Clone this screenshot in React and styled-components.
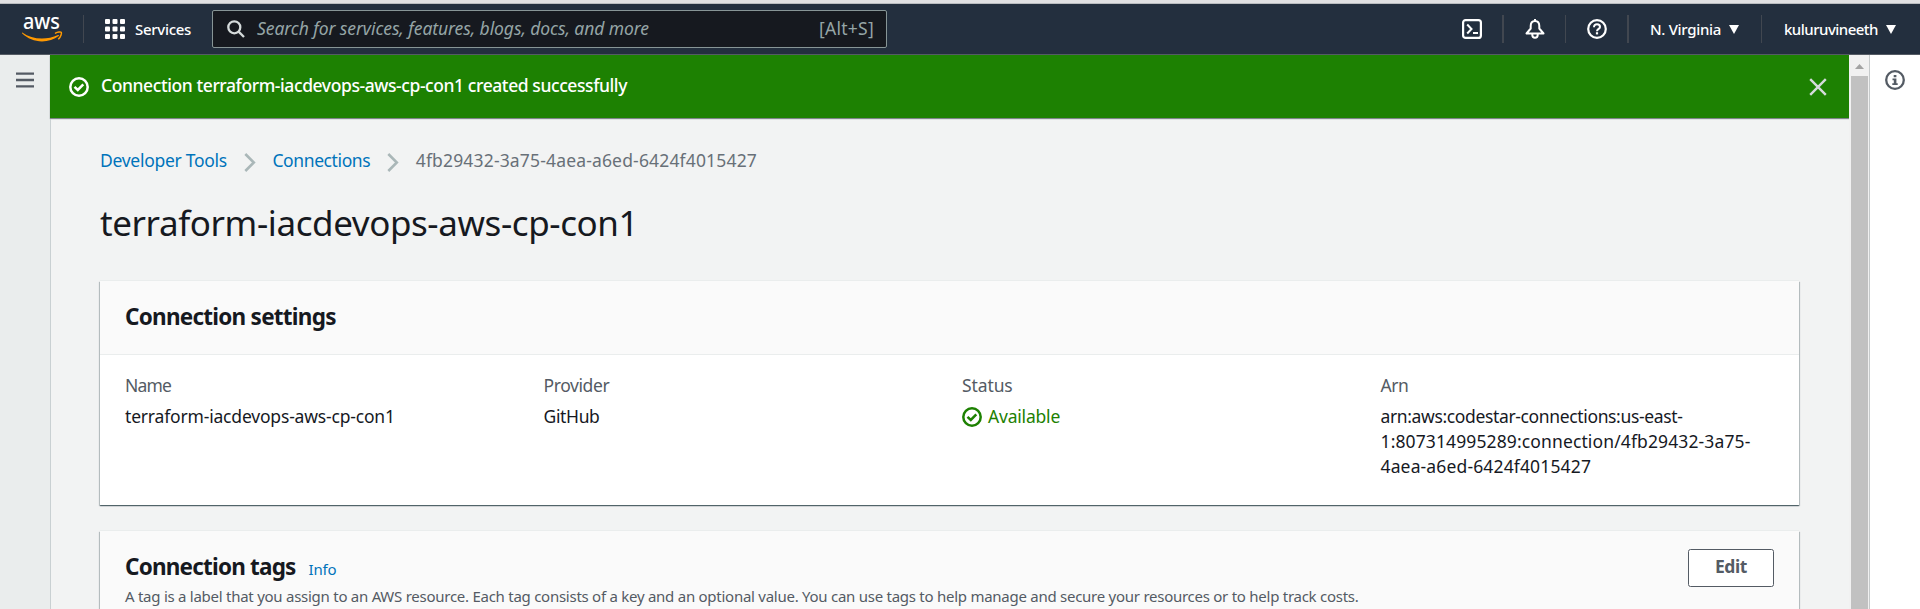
import React from "react";
import styled, { createGlobalStyle } from "styled-components";

const GlobalStyle = createGlobalStyle`
  * { box-sizing: border-box; }
  html, body { margin: 0; height: 100%; overflow: hidden; }
  body {
    font-family: "Noto Sans", "Open Sans", sans-serif;
    font-size: 17.5px;
    line-height: 25px;
    color: #16191f;
    background: #f2f3f3;
  }
  svg { display: block; flex: none; }
`;

const Page = styled.div`
  height: 609px;
  display: flex;
  flex-direction: column;
  overflow: hidden;
`;

const BrowserEdge = styled.div`
  height: 4px;
  flex: none;
  background: #e0e0e2;
  border-bottom: 1px solid #b9bcbf;
`;

const Header = styled.header`
  height: 51px;
  flex: none;
  display: flex;
  align-items: center;
  background: #232f3e;
  border-bottom: 1px solid #545b64;
  color: #fff;
`;

const Track = styled.span`
  letter-spacing: ${(p) => p.$ls || 0}px;
  white-space: nowrap;
`;

const LogoCell = styled.a`
  width: 83px;
  padding-left: 22px;
`;

const Divider = styled.span`
  width: ${(p) => p.$w || 1}px;
  height: 28px;
  background: #414750;
`;

const Services = styled.button`
  display: flex;
  align-items: center;
  gap: 10px;
  width: 128px;
  padding: 0 0 0 21px;
  border: 0;
  background: none;
  color: inherit;
  font: 500 15px/20px "Noto Sans", sans-serif;
`;

const SearchBox = styled.div`
  width: 675px;
  height: 38px;
  padding: 0 12px 0 14px;
  display: flex;
  align-items: center;
  background: #16191f;
  border: 1px solid #879596;
  border-radius: 2px;
  color: #95a5a6;
`;

const Placeholder = styled(Track)`
  flex: 1;
  margin-left: 12px;
  padding-bottom: 2px;
  font-style: italic;
`;

const Shortcut = styled(Track)`
  padding-bottom: 2px;
`;

const HeaderTools = styled.nav`
  margin-left: auto;
  display: flex;
  align-items: center;
`;

const IconButton = styled.button`
  width: ${(p) => p.$w}px;
  padding: 0;
  display: flex;
  justify-content: center;
  border: 0;
  background: none;
  color: inherit;
`;

const MenuButton = styled.button`
  width: ${(p) => p.$w}px;
  padding: 0 0 0 ${(p) => p.$pad}px;
  display: flex;
  align-items: center;
  gap: 8px;
  border: 0;
  background: none;
  color: inherit;
  font: 500 15px/20px "Noto Sans", sans-serif;
`;

const Body = styled.div`
  flex: 1;
  min-height: 0;
  display: flex;
`;

const SideRail = styled.aside`
  width: 50px;
  flex: none;
  padding: 16px 0 0 16px;
  background: #eaeded;
`;

const HelpRail = styled.aside`
  width: 51px;
  flex: none;
  padding: 15px 0 0 15px;
  background: #fff;
  border-left: 1px solid #c6cacb;
  color: #545b64;
`;

const Scrollbar = styled.div`
  width: 20px;
  flex: none;
  padding: 9px 1px 0 2px;
  display: flex;
  flex-direction: column;
  align-items: center;
  gap: 7px;
  background: #f1f1f1;
`;

const Thumb = styled.div`
  width: 100%;
  flex: 1;
  background: #c1c1c1;
`;

const Main = styled.main`
  flex: 1;
  min-width: 0;
  display: flex;
  flex-direction: column;
`;

const Flash = styled.div`
  height: 63px;
  flex: none;
  padding: 0 22px 0 19px;
  display: flex;
  align-items: center;
  gap: 12px;
  background: #1d8102;
  color: #fff;
  box-shadow: 0 1px 1px #7d8588;
`;

const FlashText = styled(Track)`
  flex: 1;
  padding-bottom: 3px;
  font-weight: 500;
`;

const Content = styled.div`
  flex: 1;
  min-height: 0;
  margin-top: 1px;
  padding: 29px 50px 0 49px;
  border-left: 1px solid #c9d0d2;
`;

const Breadcrumbs = styled.nav`
  height: 25px;
  display: flex;
  align-items: center;
`;

const Crumb = styled(Track)`
  color: ${(p) => (p.$current ? "#687078" : "#0073bb")};
`;

const Chevron = styled.svg`
  margin: 3px 16.5px 0 17px;
`;

const Title = styled.h1`
  margin: 28px 0 36px 0;
  font-size: 35px;
  line-height: 44px;
  font-weight: 400;
`;

const Card = styled.section`
  margin-bottom: 26px;
  background: #fff;
  box-shadow: 0 1px 1px 0 rgba(0, 28, 36, 0.5), 1px 1px 1px 0 rgba(0, 28, 36, 0.18),
    -1px 1px 1px 0 rgba(0, 28, 36, 0.18), 0 -1px 0 0 #eaeded;
`;

const CardHeader = styled.div`
  min-height: ${(p) => p.$h || 74}px;
  padding: 18px 25px 0;
  display: flex;
  justify-content: space-between;
  align-items: flex-start;
  background: #fafafa;
  border-bottom: 1px solid #eaeded;
`;

const CardTitle = styled.h2`
  margin: 0;
  padding-top: 4px;
  font-size: 22.5px;
  line-height: 28px;
  font-weight: 700;
`;

const TitleRow = styled.div`
  display: flex;
  align-items: baseline;
  gap: 13px;
`;

const InfoLink = styled(Track)`
  font-size: 15px;
  color: #0073bb;
`;

const Description = styled.p`
  margin: 4px 0 0;
  font-size: 15px;
  line-height: 20px;
  color: #545b64;
`;

const EditButton = styled.button`
  width: 86px;
  height: 38px;
  padding: 0 0 4px;
  background: #fff;
  border: 1px solid #545b64;
  border-radius: 2.5px;
  color: #545b64;
  font: 700 17.5px/25px "Noto Sans", sans-serif;
`;

const Fields = styled.dl`
  margin: 0;
  padding: 18px 0 26px 25px;
  display: grid;
  grid-template-columns: repeat(4, 418.5px);
`;

const Label = styled.dt`
  margin-bottom: 6px;
  color: #545b64;
`;

const Value = styled.dd`
  margin: 0;
  display: flex;
  flex-direction: column;
`;

const Status = styled.span`
  display: flex;
  align-items: center;
  gap: 6px;
  color: #1d8102;
`;

const AwsLogo = () => (
  <svg width="42" height="44" viewBox="0 -8 42 44">
    <text x="1" y="14" fontSize="21.500" fontWeight="500" fill="#fff" textLength="37" lengthAdjust="spacingAndGlyphs">aws</text>
    <path d="M0.3 17.6C6 21.600 12.500 23.600 20 23.600c5.200 0 11-1.300 16-3.600.8-.4 1.500.5.7 1.100C32.300 24.700 26 26.400 20 26.400 12.500 26.400 5.500 23.500.2 18.500c-.5-.5-.4-1 .1-.9z" fill="#f90" />
    <path d="M33.500 18.100c2-1.200 5.500-1.300 5.800-.8.500.8-.5 4.700-2.700 6.500" fill="none" stroke="#f90" strokeWidth="1.500" strokeLinecap="round" />
  </svg>
);

const GridIcon = () => (
  <svg width="20" height="20" viewBox="0 0 20 20" fill="#fff">
    {[0, 7.500, 15].map((y) => [0, 7.500, 15].map((x) => <rect key={`${x}-${y}`} x={x} y={y} width="5" height="5" rx="1" />))}
  </svg>
);

const SearchIcon = () => (
  <svg width="18" height="18" viewBox="0 0 18 18" fill="none" stroke="#d5dbdb" strokeWidth="2.300">
    <circle cx="7.300" cy="7.300" r="6" />
    <path d="M11.600 11.600l5.400 5.400" />
  </svg>
);

const TerminalIcon = () => (
  <svg width="20" height="20" viewBox="0 0 20 20" fill="none" stroke="currentColor" strokeWidth="2.200">
    <rect x="1.100" y="1.100" width="17.800" height="17.800" rx="2.500" />
    <path d="M5.200 5.500l4.300 4.500-4.300 4.500M11 14h5" strokeWidth="2" />
  </svg>
);

const BellIcon = () => (
  <svg width="20" height="20" viewBox="0 0 20 20" fill="none" stroke="currentColor" strokeWidth="2" strokeLinejoin="round">
    <path d="M10 2C6.800 2 5.700 4.500 5.700 7v2.500L1.500 14.500h17L14.300 9.500V7C14.300 4.500 13.200 2 10 2zM10 0v2" />
    <path d="M7.300 15v1a2.700 2.700 0 0 0 5.400 0v-1" />
  </svg>
);

const HelpIcon = () => (
  <svg width="20" height="20" viewBox="0 0 20 20" fill="none" stroke="currentColor" strokeWidth="2.200">
    <circle cx="10" cy="10" r="8.800" />
    <path d="M7 8.200C7 6.400 8.200 5.300 10 5.300s3 1.100 3 2.600c0 1.900-3 2-3 4.300" strokeWidth="2" />
    <path d="M10 13.200v2.200" strokeWidth="2.200" />
  </svg>
);

const Caret = () => (
  <svg width="10" height="9" viewBox="0 0 10 9"><path d="M0 0h10L5 9z" fill="#fff" /></svg>
);

const CheckIcon = () => (
  <svg width="20" height="20" viewBox="0 0 20 20" fill="none" stroke="currentColor" strokeWidth="2.500">
    <circle cx="10" cy="10" r="8.700" />
    <path d="M5.500 9.800l3.300 3.200 5.500-5.600" />
  </svg>
);

const CloseIcon = () => (
  <svg width="18" height="18" viewBox="0 0 18 18" stroke="#d5dbdb" strokeWidth="2.400">
    <path d="M1.200 1.200l15.600 15.600M16.800 1.200L1.200 16.800" />
  </svg>
);

const MenuIcon = () => (
  <svg width="18" height="18" viewBox="0 0 18 18" stroke="#545b64" strokeWidth="2.300">
    <path d="M0 2.700h18M0 9h18M0 15.400h18" />
  </svg>
);

const InfoIcon = () => (
  <svg width="20" height="20" viewBox="0 0 20 20">
    <circle cx="10" cy="10" r="8.800" fill="none" stroke="currentColor" strokeWidth="2.300" />
    <path d="M8.700 5h2.700v2.300H8.700zM7.500 8.500h3.900v4.700h1.300V15H7.300v-1.800h1.500v-2.900H7.500z" fill="currentColor" />
  </svg>
);

const CrumbArrow = () => (
  <Chevron width="12" height="19" viewBox="0 0 12 19" fill="none" stroke="#aab7b8" strokeWidth="2.600">
    <path d="M1.300 1l8.500 8.500L1.300 18" />
  </Chevron>
);

const Field = ({ label, ls, children }) => (
  <div>
    <Label><Track $ls={ls}>{label}</Track></Label>
    <Value>{children}</Value>
  </div>
);

export default function App() {
  return (
    <Page>
      <GlobalStyle />
      <BrowserEdge />
      <Header>
        <LogoCell><AwsLogo /></LogoCell>
        <Divider />
        <Services><GridIcon /><Track $ls={-0.3}>Services</Track></Services>
        <SearchBox>
          <SearchIcon />
          <Placeholder $ls={-0.077}>Search for services, features, blogs, docs, and more</Placeholder>
          <Shortcut $ls={0.27}>[Alt+S]</Shortcut>
        </SearchBox>
        <HeaderTools>
          <IconButton $w={61}><TerminalIcon /></IconButton>
          <Divider $w={2} />
          <IconButton $w={61}><BellIcon /></IconButton>
          <Divider />
          <IconButton $w={61}><HelpIcon /></IconButton>
          <Divider $w={2} />
          <MenuButton $w={132} $pad={21}><Track $ls={-0.32}>N. Virginia</Track><Caret /></MenuButton>
          <Divider />
          <MenuButton $w={158} $pad={22}><Track $ls={-0.52}>kuluruvineeth</Track><Caret /></MenuButton>
        </HeaderTools>
      </Header>
      <Body>
        <SideRail><MenuIcon /></SideRail>
        <Main>
          <Flash>
            <CheckIcon />
            <FlashText $ls={-0.415}>Connection terraform-iacdevops-aws-cp-con1 created successfully</FlashText>
            <CloseIcon />
          </Flash>
          <Content>
            <Breadcrumbs>
              <Crumb $ls={-0.28}>Developer Tools</Crumb>
              <CrumbArrow />
              <Crumb $ls={-0.4}>Connections</Crumb>
              <CrumbArrow />
              <Crumb $current $ls={0.165}>4fb29432-3a75-4aea-a6ed-6424f4015427</Crumb>
            </Breadcrumbs>
            <Title><Track $ls={-0.41}>terraform-iacdevops-aws-cp-con1</Track></Title>
            <Card>
              <CardHeader>
                <CardTitle><Track $ls={-0.75}>Connection settings</Track></CardTitle>
              </CardHeader>
              <Fields>
                <Field label="Name" ls={-0.8}><Track $ls={-0.18}>terraform-iacdevops-aws-cp-con1</Track></Field>
                <Field label="Provider" ls={-0.4}><Track $ls={-0.35}>GitHub</Track></Field>
                <Field label="Status" ls={-0.1}>
                  <Status><CheckIcon /><Track $ls={-0.2}>Available</Track></Status>
                </Field>
                <Field label="Arn" ls={-0.4}>
                  <Track $ls={-0.36}>arn:aws:codestar-connections:us-east-</Track>
                  <Track $ls={0.12}>1:807314995289:connection/4fb29432-3a75-</Track>
                  <Track $ls={0.144}>4aea-a6ed-6424f4015427</Track>
                </Field>
              </Fields>
            </Card>
            <Card>
              <CardHeader $h={96}>
                <div>
                  <TitleRow>
                    <CardTitle><Track $ls={-0.8}>Connection tags</Track></CardTitle>
                    <InfoLink $ls={-0.2}>Info</InfoLink>
                  </TitleRow>
                  <Description>
                    <Track $ls={-0.26}>
                      A tag is a label that you assign to an AWS resource. Each tag consists of a key and an optional value. You can use tags to help manage and secure your resources or to help track costs.
                    </Track>
                  </Description>
                </div>
                <EditButton><Track $ls={-0.4}>Edit</Track></EditButton>
              </CardHeader>
            </Card>
          </Content>
        </Main>
        <Scrollbar>
          <svg width="9" height="5" viewBox="0 0 9 5"><path d="M0 5L4.500 0 9 5z" fill="#a3a3a3" /></svg>
          <Thumb />
        </Scrollbar>
        <HelpRail><InfoIcon /></HelpRail>
      </Body>
    </Page>
  );
}
